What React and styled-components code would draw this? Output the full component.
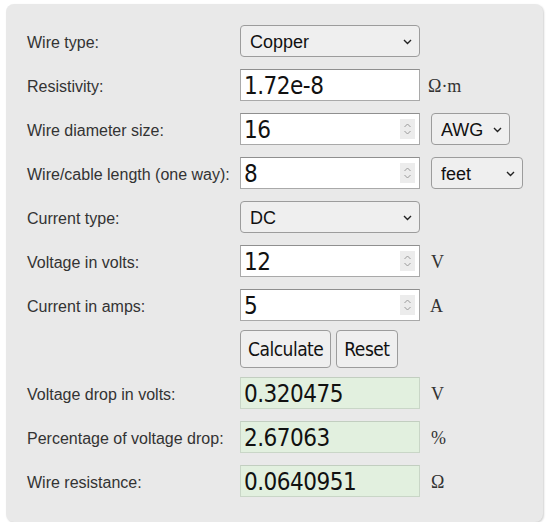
import React from "react";
import styled, { createGlobalStyle } from "styled-components";

const Global = createGlobalStyle`
  html, body { margin: 0; padding: 0; background: #ffffff; }
  body { font-family: "Liberation Sans", Arial, sans-serif; }
`;

const Panel = styled.div`
  margin: 4px 0 0 6px;
  width: 537px;
  height: 518px;
  box-sizing: border-box;
  background: #e9e9e9;
  border-radius: 8px;
  box-shadow: 1px 1px 2px rgba(0, 0, 0, 0.18);
  padding: 21px 0 0 21px;
  display: flex;
  flex-direction: column;
  gap: 12px;
`;

const Row = styled.div`
  display: flex;
  align-items: center;
  height: 32px;
`;

const Label = styled.div`
  width: 213px;
  flex: none;
  padding-top: 3px;
  font-family: "Liberation Sans", Arial, sans-serif;
  font-size: 16px;
  color: #333;
`;

const fieldFont = `"DejaVu Sans", Tahoma, Verdana, sans-serif`;

const Box = styled.div`
  width: 180px;
  height: 32px;
  box-sizing: border-box;
  flex: none;
  display: flex;
  align-items: center;
  border: 1px solid ${(p) => (p.$out ? "#c9d6c7" : "#a9a9a9")};
  border-top-color: ${(p) => (p.$out ? "#c2cec0" : "#8f8f8f")};
  background: ${(p) => (p.$out ? "#e2f0df" : "#ffffff")};
`;

const Input = styled.input`
  flex: 1;
  min-width: 0;
  border: none;
  outline: none;
  background: transparent;
  padding: 2px 0 0 3px;
  font-family: ${fieldFont};
  font-stretch: condensed;
  font-size: 24px;
  letter-spacing: -0.5px;
  color: #111;
  height: 100%;
  box-sizing: border-box;
`;

const Spinner = styled.div`
  width: 15px;
  height: 20px;
  margin-right: 4px;
  background: #ececec;
  display: flex;
  align-items: center;
  justify-content: center;
`;

const SelectWrap = styled.div`
  position: relative;
  width: ${(p) => p.$w}px;
  height: 32px;
  flex: none;
  margin-left: ${(p) => p.$ml || 0}px;
`;

const Select = styled.select`
  appearance: none;
  -webkit-appearance: none;
  width: 100%;
  height: 100%;
  box-sizing: border-box;
  border: 1px solid #9c9c9c;
  border-radius: 4px;
  background: #efefef;
  padding: 1px 0 0 9px;
  font-family: "Liberation Sans", Arial, sans-serif;
  font-size: 18px;
  color: #111;
  outline: none;
`;

const Chevron = styled.svg`
  position: absolute;
  right: 8px;
  top: 14px;
  pointer-events: none;
`;

const Unit = styled.span`
  margin-left: ${(p) => p.$ml || 9}px;
  font-family: "Liberation Serif", "Times New Roman", serif;
  font-size: 18px;
  color: #333;
  padding-top: 3px;
`;

const Buttons = styled.div`
  display: flex;
  gap: 5px;
  height: 38px;
  margin: -3px 0;
`;

const Button = styled.button`
  height: 38px;
  box-sizing: border-box;
  padding: 0 7px;
  border: 1px solid #9c9c9c;
  border-radius: 4px;
  background: #efefef;
  font-family: ${fieldFont};
  font-stretch: condensed;
  font-size: 19px;
  letter-spacing: -0.5px;
  color: #111;
`;

const Spacer = styled.div`
  width: 213px;
  flex: none;
`;

function SpinIcon() {
  return (
    <Spinner>
      <svg width="9" height="14" viewBox="0 0 9 14">
        <path d="M1.5 5 L4.5 2 L7.5 5" fill="none" stroke="#9a9a9a" strokeWidth="1" />
        <path d="M1.5 9 L4.5 12 L7.5 9" fill="none" stroke="#9a9a9a" strokeWidth="1" />
      </svg>
    </Spinner>
  );
}

function Dropdown({ w, ml, value, options }) {
  return (
    <SelectWrap $w={w} $ml={ml}>
      <Select defaultValue={value}>
        {options.map((o) => (
          <option key={o}>{o}</option>
        ))}
      </Select>
      <Chevron width="9" height="6" viewBox="0 0 9 6">
        <path d="M1 1 L4.5 4.5 L8 1" fill="none" stroke="#222" strokeWidth="1.4" />
      </Chevron>
    </SelectWrap>
  );
}

function Field({ value, spin, out }) {
  return (
    <Box $out={out}>
      <Input defaultValue={value} readOnly={out} />
      {spin && <SpinIcon />}
    </Box>
  );
}

export default function App() {
  return (
    <>
      <Global />
      <Panel>
        <Row>
          <Label>Wire type:</Label>
          <Dropdown w={180} value="Copper" options={["Copper", "Aluminum", "Carbon", "Gold", "Silver"]} />
        </Row>
        <Row>
          <Label>Resistivity:</Label>
          <Field value="1.72e-8" />
          <Unit $ml={8}>Ω·m</Unit>
        </Row>
        <Row>
          <Label>Wire diameter size:</Label>
          <Field value="16" spin />
          <Dropdown w={79} ml={11} value="AWG" options={["AWG", "inch", "mm"]} />
        </Row>
        <Row>
          <Label>Wire/cable length (one way):</Label>
          <Field value="8" spin />
          <Dropdown w={92} ml={11} value="feet" options={["feet", "meters"]} />
        </Row>
        <Row>
          <Label>Current type:</Label>
          <Dropdown w={180} value="DC" options={["DC", "AC single phase", "AC three phase"]} />
        </Row>
        <Row>
          <Label>Voltage in volts:</Label>
          <Field value="12" spin />
          <Unit $ml={11}>V</Unit>
        </Row>
        <Row>
          <Label>Current in amps:</Label>
          <Field value="5" spin />
          <Unit $ml={10}>A</Unit>
        </Row>
        <Row>
          <Spacer />
          <Buttons>
            <Button>Calculate</Button>
            <Button>Reset</Button>
          </Buttons>
        </Row>
        <Row>
          <Label>Voltage drop in volts:</Label>
          <Field value="0.320475" out />
          <Unit $ml={11}>V</Unit>
        </Row>
        <Row>
          <Label>Percentage of voltage drop:</Label>
          <Field value="2.67063" out />
          <Unit $ml={11}>%</Unit>
        </Row>
        <Row>
          <Label>Wire resistance:</Label>
          <Field value="0.0640951" out />
          <Unit $ml={11}>Ω</Unit>
        </Row>
      </Panel>
    </>
  );
}
